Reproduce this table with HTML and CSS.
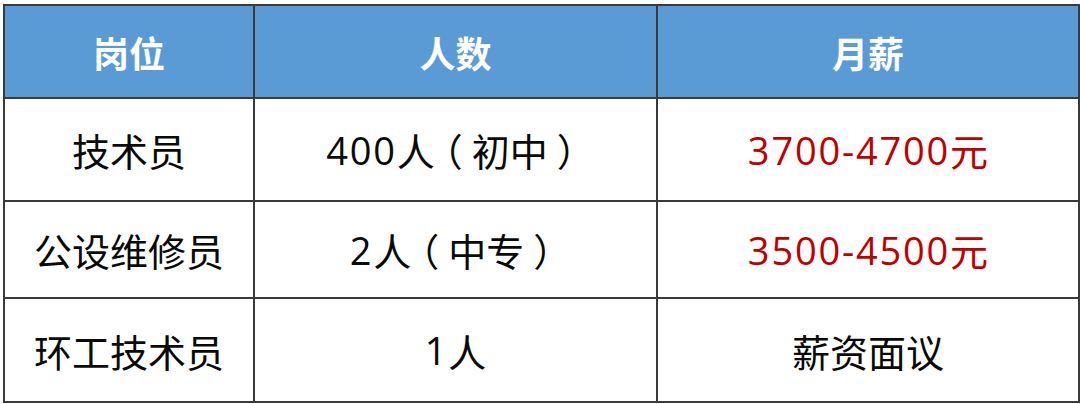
FILE: index.html
```html
<!DOCTYPE html>
<html lang="zh-CN">
<head>
<meta charset="utf-8">
<link rel="stylesheet" href="styles.css">
</head>
<body>
<div class="table">
  <div class="cell head">岗位</div>
  <div class="cell head">人数</div>
  <div class="cell head">月薪</div>

  <div class="cell">技术员</div>
  <div class="cell"><span class="num">400</span>人<span class="punct">（</span>初中<span class="punct">）</span></div>
  <div class="cell red"><span class="num">3700-4700</span>元</div>

  <div class="cell">公设维修员</div>
  <div class="cell"><span class="num">2</span>人<span class="punct">（</span>中专<span class="punct">）</span></div>
  <div class="cell red"><span class="num">3500-4500</span>元</div>

  <div class="cell">环工技术员</div>
  <div class="cell"><span class="num">1</span>人</div>
  <div class="cell">薪资面议</div>
</div>
</body>
</html>
```

FILE: styles.css
```css
html, body {
  margin: 0;
  padding: 0;
  background: #ffffff;
}
body {
  padding: 4px 0 0 3px;
  font-family: "Open Sans", "Noto Sans CJK SC", sans-serif;
}
.table {
  display: grid;
  grid-template-columns: 248px 401px 420px;
  grid-template-rows: 91px 101px 95px 102px;
  gap: 2px;
  padding: 2px;
  width: max-content;
  background: #3a3a3a;
}
.cell {
  background: #ffffff;
  display: flex;
  align-items: center;
  justify-content: center;
  font-size: 38px;
  color: #0a0a0a;
  white-space: nowrap;
}
.num {
  letter-spacing: 1.8px;
}
.punct {
  font-feature-settings: "halt" 1;
  padding: 0 9px;
}
.head {
  background: #5b9bd5;
  color: #ffffff;
  font-weight: 700;
  font-size: 36px;
  font-family: "Noto Sans CJK SC", sans-serif;
}
.red {
  color: #c00000;
}
```
